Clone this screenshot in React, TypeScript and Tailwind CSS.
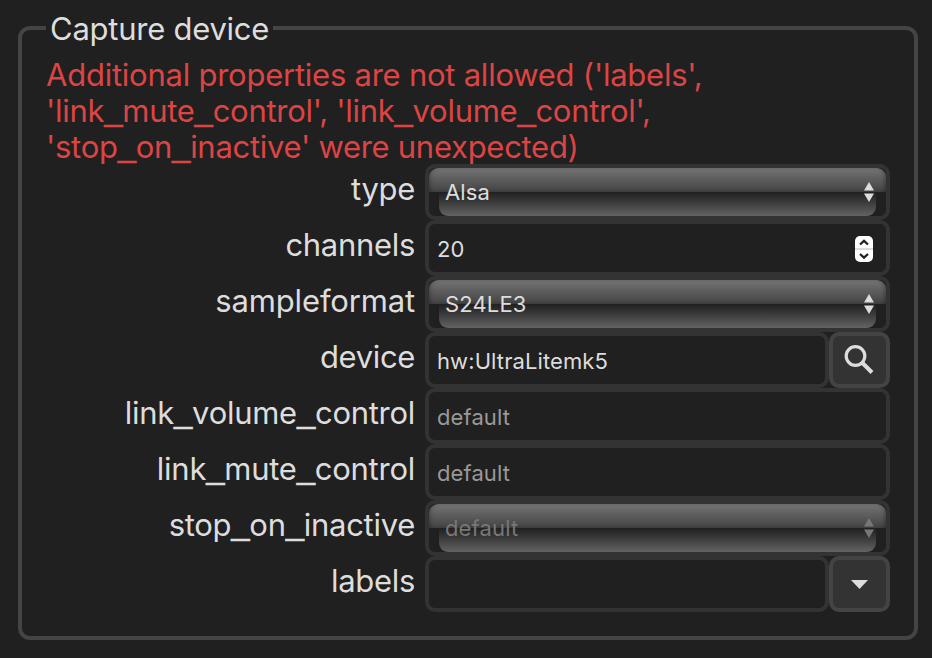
import { Fragment, type ReactNode } from "react";

const box = "h-14 rounded-[10px] border-4 border-[#333] bg-[#202020]";
const inputText =
  "min-w-0 px-2 text-[22px] text-[#ddd] outline-none placeholder:text-[#999] placeholder:opacity-100";

// Sets underscores in a wider face so that they join the letters beside them.
function Words({ text }: { text: string }) {
  return text.split("_").map((part, i) => (
    <Fragment key={i}>
      {i > 0 && (
        <span className="align-[2px] font-['Liberation_Sans',sans-serif] text-[33px] leading-[0] tracking-[-0.3px] [-webkit-text-stroke:0.4px_currentColor]">_</span>
      )}
      {part}
    </Fragment>
  ));
}

function Row({ label, tracking, children }: { label: string; tracking: string; children: ReactNode }) {
  return (
    <div className="flex h-14">
      <label className={`w-[368px] whitespace-nowrap pt-[7px] text-right text-[31px] leading-9 ${tracking}`}>
        <Words text={label} />
      </label>
      <div className="ml-[10px] flex w-[465px]">{children}</div>
    </div>
  );
}

function Select({ value, disabled = false }: { value: string; disabled?: boolean }) {
  return (
    <button disabled={disabled} className={`${box} relative w-full text-left`}>
      <span className="block h-6 rounded-t-[9px] bg-linear-to-b from-[#757575] to-[#434343] shadow-[inset_3px_0_4px_-2px_#0005,inset_-3px_0_4px_-2px_#0005]" />
      <span className="mx-[10px] block h-6 rounded-b-[9px] bg-linear-to-b from-[#202020] to-[#636363]" />
      <span className={`absolute inset-0 flex items-center justify-between pl-4 pr-3 text-[22px] tracking-[0.15px] ${disabled ? "text-[#777]" : "text-[#ddd]"}`}>
        <span className="pt-px">{value}</span>
        <svg width="10" height="20" viewBox="0 0 10 20" fill="currentColor">
          <path d="M5 0L10 8.5H0zM0 11.5H10L5 20z" />
        </svg>
      </span>
    </button>
  );
}

function IconButton({ label, children }: { label: string; children: ReactNode }) {
  return (
    <button aria-label={label} className="flex h-14 w-[61px] shrink-0 items-center justify-center rounded-[10px] border-4 border-[#444] bg-[#333] text-[#ddd]">
      {children}
    </button>
  );
}

export default function App() {
  return (
    <main className="h-[658px] w-[932px] overflow-hidden bg-[#202020] pl-[18px] pt-[9px] font-['Inter',sans-serif] text-[#ddd]">
      <fieldset className="h-[631px] w-[900px] rounded-[12px] border-4 border-[#444] pl-[25px]">
        <legend className="-ml-px h-[38px] w-[227px] whitespace-nowrap pl-[4px] text-[31px] leading-[39px] tracking-[-0.25px]">Capture device</legend>
        <div className="-ml-px mt-[9px] h-[108px] whitespace-nowrap pt-px text-[31px] leading-9 text-[#dd4444]">
          <div className="h-9 tracking-[-0.24px]">Additional properties are not allowed ('labels',</div>
          <div className="h-9 tracking-[-0.28px]"><Words text="'link_mute_control', 'link_volume_control'," /></div>
          <div className="h-9 tracking-[-0.28px]"><Words text="'stop_on_inactive' were unexpected)" /></div>
        </div>
        <Row label="type" tracking="tracking-[-0.3px]"><Select value="Alsa" /></Row>
        <Row label="channels" tracking="tracking-[-0.3px]">
          <div className={`${box} flex w-full items-center pr-[13px]`}>
            <input aria-label="channels" className={`${inputText} flex-1 pt-[3px] tracking-[0.2px]`} defaultValue="20" />
            <svg className="translate-y-px" width="18" height="26" viewBox="0 0 18 26" fill="none">
              <rect width="18" height="26" rx="5" fill="#fff" />
              <path d="M0 13H18" stroke="#ddd" strokeWidth="2" />
              <path d="M5 8.5L9 4.8L13 8.5M5 18L9 21.7L13 18" stroke="#222" strokeWidth="2.3" />
            </svg>
          </div>
        </Row>
        <Row label="sampleformat" tracking="tracking-[-0.15px]"><Select value="S24LE3" /></Row>
        <Row label="device" tracking="tracking-[-0.35px]">
          <input aria-label="device" className={`${box} ${inputText} flex-1 pt-px tracking-[0.1px]`} defaultValue="hw:UltraLitemk5" />
          <IconButton label="Search">
            <svg className="-translate-x-px" width="30" height="30" viewBox="0 0 30 30" fill="none" stroke="currentColor">
              <circle cx="11.5" cy="11" r="9.3" strokeWidth="3.2" />
              <path d="M18.5 18L28 27.5" strokeWidth="4" />
            </svg>
          </IconButton>
        </Row>
        <Row label="link_volume_control" tracking="tracking-[-0.28px]">
          <input aria-label="link volume control" className={`${box} ${inputText} w-full pt-px tracking-[0.1px]`} placeholder="default" />
        </Row>
        <Row label="link_mute_control" tracking="tracking-[-0.25px]">
          <input aria-label="link mute control" className={`${box} ${inputText} w-full pt-px tracking-[0.1px]`} placeholder="default" />
        </Row>
        <Row label="stop_on_inactive" tracking="tracking-[-0.28px]"><Select value="default" disabled /></Row>
        <Row label="labels" tracking="tracking-[-0.3px]">
          <input aria-label="labels" className={`${box} ${inputText} flex-1`} />
          <IconButton label="Show labels">
            <svg width="17" height="9" viewBox="0 0 17 9" fill="currentColor"><path d="M0 0H17L8.5 9z" /></svg>
          </IconButton>
        </Row>
      </fieldset>
    </main>
  );
}
